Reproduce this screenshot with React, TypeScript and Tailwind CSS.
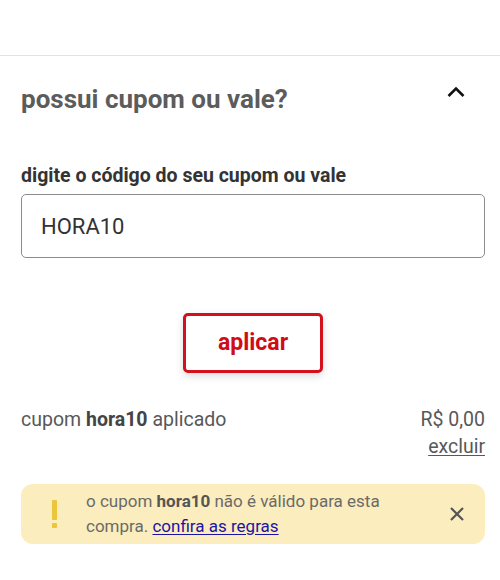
import { useState } from 'react'

const FONT = { fontFamily: 'Roboto, "Noto Sans", sans-serif' }

export default function App() {
  const [code, setCode] = useState('HORA10')
  const [open, setOpen] = useState(true)
  const [showAlert, setShowAlert] = useState(true)

  return (
    <div className="h-[580px] w-[500px] overflow-hidden bg-white" style={FONT}>
      <div className="h-[56px] border-b-[1.5px] border-[#e2e2e2]" />

      <section className="pl-[21px] pr-[15px]">
        <div className="mt-[28px] flex items-start justify-between">
          <h2 className="text-[26px] font-bold leading-[30px] text-[#5c5c5c]">possui cupom ou vale?</h2>
          <button
            type="button"
            onClick={() => setOpen(!open)}
            className="mr-[19px] flex h-[16px] w-[20px] items-center justify-center"
            aria-label="recolher"
          >
            <svg width="18" height="12" viewBox="0 0 18 12" className={open ? '' : 'rotate-180'}>
              <path d="M1.5 10L9 2.5L16.5 10" fill="none" stroke="#111" strokeWidth="2.6" />
            </svg>
          </button>
        </div>

        {open && (
          <>
            <label className="mt-[50px] block text-[19.5px] font-bold leading-[24px] text-[#333]">
              digite o código do seu cupom ou vale
            </label>
            <input
              value={code}
              onChange={(e) => setCode(e.target.value)}
              className="mt-[6px] block h-[64px] w-full rounded-[5px] border border-[#8c8c8c] pl-[19px] text-[22px] text-[#333] outline-none"
              style={FONT}
            />

            <div className="mt-[55px] flex justify-center">
              <button
                type="button"
                className="h-[60px] w-[140px] rounded-[5px] border-[3px] border-[#d3101c] bg-white text-[23px] font-bold text-[#cf0c17] shadow-[0_3px_8px_rgba(0,0,0,0.14)]"
              >
                aplicar
              </button>
            </div>

            <div className="mt-[33px] flex items-start justify-between text-[19.5px] leading-[27px] text-[#585858]">
              <p>
                cupom <b className="font-bold text-[#444]">hora10</b> aplicado
              </p>
              <div className="flex flex-col items-end">
                <span>R$ 0,00</span>
                <button type="button" className="underline decoration-1 underline-offset-2">
                  excluir
                </button>
              </div>
            </div>

            {showAlert && (
              <div className="mt-[24px] flex h-[60px] items-center rounded-[12px] bg-[#fbedbd]">
                <div className="flex w-[65px] flex-col items-center pl-[1px]">
                  <span className="h-[20px] w-[5px] rounded-[1px] bg-[#ebc53a]" />
                  <span className="mt-[3px] h-[5px] w-[5px] rounded-[1px] bg-[#ebc53a]" />
                </div>
                <p className="flex-1 pr-[40px] text-[17px] leading-[25px] text-[#6a6a6a]">
                  o cupom <b className="font-bold text-[#555]">hora10</b> não é válido para esta compra.{' '}
                  <a href="#" className="text-[#1c14a8] underline underline-offset-2">
                    confira as regras
                  </a>
                </p>
                <button
                  type="button"
                  onClick={() => setShowAlert(false)}
                  className="mr-[20px] flex h-[16px] w-[16px] items-center justify-center"
                  aria-label="fechar"
                >
                  <svg width="14" height="14" viewBox="0 0 14 14">
                    <path d="M1 1L13 13M13 1L1 13" stroke="#555" strokeWidth="2.2" />
                  </svg>
                </button>
              </div>
            )}
          </>
        )}
      </section>
    </div>
  )
}
